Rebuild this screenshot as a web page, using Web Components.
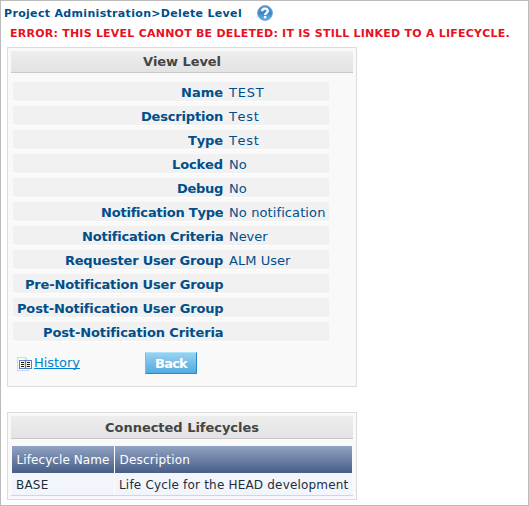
<!DOCTYPE html>
<html lang="en">
<head>
<meta charset="utf-8">
<title>Delete Level</title>
<style>
html,body{margin:0;height:100%}
body{font-family:Verdana,"DejaVu Sans",sans-serif;font-kerning:none;color:#004f8b;background:#fff;overflow:hidden}
</style>
</head>
<body>
<level-page></level-page>
<script>
// A single line of text whose tracking is adjusted to the width given in "w".
class TextRun extends HTMLElement{
  connectedCallback(){
    const r=this.attachShadow({mode:"open"});
    r.innerHTML=`<style>:host{display:inline-block;white-space:nowrap;vertical-align:top}span{display:inline-block}</style><span><slot></slot></span>`;
    const s=r.querySelector("span"),w=+this.getAttribute("w");
    const n=this.textContent.length;
    s.style.letterSpacing=((w-s.getBoundingClientRect().width)/n)+"px";
    this.style.width=w+"px";
  }
}
class HelpIcon extends HTMLElement{
  connectedCallback(){
    this.attachShadow({mode:"open"}).innerHTML=`<style>:host{display:block;width:16px;height:16px}svg{display:block}</style>
<svg width="16" height="16" viewBox="0 0 16 16"><defs><linearGradient id="g" x1="0" y1="0" x2="0" y2="1"><stop offset="0" stop-color="#5f9bd0"/><stop offset=".5" stop-color="#3985cb"/><stop offset="1" stop-color="#62b9f0"/></linearGradient></defs>
<circle cx="8" cy="8" r="7.4" fill="url(#g)" stroke="#6d9bc8" stroke-width=".9"/>
<path d="M5.2 6.2C5.2 2.8 10.8 2.8 10.8 6C10.8 7.8 8.1 7.9 8.1 10" fill="none" stroke="#fff" stroke-width="2.3"/><rect x="6.9" y="11" width="2.4" height="2.2" fill="#fff"/></svg>`;
  }
}
class HistoryIcon extends HTMLElement{
  connectedCallback(){
    this.attachShadow({mode:"open"}).innerHTML=`<style>:host{display:block;width:15px;height:14px}svg{display:block}</style>
<svg width="15" height="14" viewBox="0 0 15 14" shape-rendering="crispEdges"><path d="M.5.5H8.5L11.5 3.5V13.5H.5Z" fill="#f6fbff" stroke="#c3dcf1"/><path d="M8.5.5V3.5H11.5" fill="none" stroke="#c3dcf1"/>
<rect x="2.5" y="3.5" width="12" height="8" fill="#fff" stroke="#5d7fc0"/><path d="M8 3H9V12H8Z" fill="#777"/><path d="M7 4H8V11H7ZM9 4H10V11H9Z" fill="#e5dfcf"/>
<path d="M4 5H7V6H4ZM4 7H7V8H4ZM4 9H7V10H4ZM10 5H13V6H10ZM10 7H13V8H10ZM10 9H13V10H10Z" fill="#111"/></svg>`;
  }
}
class TitledPanel extends HTMLElement{
  connectedCallback(){
    this.attachShadow({mode:"open"}).innerHTML=`<style>
:host{display:block;box-sizing:border-box;width:350px;border:1px solid #dcdcdc;background:#f9f9f9;padding:3px}
header{box-sizing:border-box;height:var(--head,22px);border-bottom:1px solid #c8c8c8;background:linear-gradient(#eeeeee,#e3e3e3);text-align:center;font-weight:bold;font-size:13px;line-height:22px;color:#444;padding-top:var(--drop,0px)}
</style><header><slot name="title"></slot></header><slot></slot>`;
  }
}
class FieldRow extends HTMLElement{
  connectedCallback(){
    const a=k=>this.getAttribute(k);
    this.attachShadow({mode:"open"}).innerHTML=`<style>
:host{display:grid;grid-template-columns:210px 1fr;column-gap:6px;width:316px;height:19px;background:#f1f1f1;border-bottom:1px solid #fff;margin-bottom:4px;font-size:13px;line-height:22px}
b{text-align:right}
</style><b><text-run w="${a("lw")-1}">${a("label")}</text-run></b><span>${a("value")?`<text-run w="${a("vw")-.5}">${a("value")}</text-run>`:""}</span>`;
  }
}
class BackButton extends HTMLElement{
  connectedCallback(){
    this.attachShadow({mode:"open"}).innerHTML=`<style>
:host{display:block;width:52px;height:22px}
button{all:unset;box-sizing:border-box;display:block;width:52px;height:22px;border:1px solid;border-color:#a9e6fb #2489cd #2489cd #6fc1ec;background:linear-gradient(#9bd0f0,#4fabe0);color:#fff;font-weight:bold;font-size:13px;line-height:21px;text-align:center}
</style><button><slot></slot></button>`;
  }
}
class LifecycleTable extends HTMLElement{
  connectedCallback(){
    this.attachShadow({mode:"open"}).innerHTML=`<style>
:host{display:block;margin-top:7px;border-bottom:1px solid #d5d5d5;font-size:12px}
.row{display:grid;grid-template-columns:102px 1fr;column-gap:1px;margin:0 1px}
.head{background:#fff;color:#fff}
.head div{height:27px;line-height:29px;padding-left:4.5px;background:linear-gradient(#90a3c3,#485e87)}
.body{color:#222d3c;background:#fbfdff}
.body div{height:22px;line-height:25px;padding-left:4px;background:#f2f6fc}
</style><div class="row head"><div><text-run w="93">Lifecycle Name</text-run></div><div><text-run w="70.5">Description</text-run></div></div>
<div class="row body"><div><text-run w="32.5">BASE</text-run></div><div><text-run w="229.5">Life Cycle for the HEAD development</text-run></div></div>`;
  }
}
class LevelPage extends HTMLElement{
  connectedCallback(){
    this.attachShadow({mode:"open"}).innerHTML=`<style>
:host{display:block;box-sizing:border-box;width:529px;height:506px;border:1px solid #bbb;padding:4px 0 0 3px}
.crumb{display:flex;height:19px;font-weight:bold;font-size:11px;line-height:17px;gap:15px}
.error{height:23px;padding-left:6px;color:#e81123;font-weight:bold;font-size:11px;line-height:19px}
titled-panel{margin-left:3px}
.level{height:340px}
.fields{padding:9px 0 0 2px}
.actions{display:flex;padding:6px 0 0 6px;font-size:13px}
.actions history-icon{margin:5px 2px 0 0}
.actions a{width:111px;color:#0082cf;line-height:21px}
.actions a text-run{border-bottom:1px solid #0082cf;height:16px}
.linked{margin-top:25px;height:88px;--head:23px;--drop:1px}
</style>
<div class="crumb"><text-run w="238">Project Administration&gt;Delete Level</text-run><help-icon></help-icon></div>
<div class="error"><text-run w="500">ERROR: THIS LEVEL CANNOT BE DELETED: IT IS STILL LINKED TO A LIFECYCLE.</text-run></div>
<titled-panel class="level"><text-run slot="title" w="78">View Level</text-run>
<div class="fields">
<field-row label="Name" lw="43" value="TEST" vw="36"></field-row>
<field-row label="Description" lw="83" value="Test" vw="31"></field-row>
<field-row label="Type" lw="36" value="Test" vw="31"></field-row>
<field-row label="Locked" lw="52" value="No" vw="18"></field-row>
<field-row label="Debug" lw="47" value="No" vw="18"></field-row>
<field-row label="Notification Type" lw="123" value="No notification" vw="97"></field-row>
<field-row label="Notification Criteria" lw="142" value="Never" vw="39"></field-row>
<field-row label="Requester User Group" lw="159" value="ALM User" vw="62"></field-row>
<field-row label="Pre-Notification User Group" lw="199"></field-row>
<field-row label="Post-Notification User Group" lw="207"></field-row>
<field-row label="Post-Notification Criteria" lw="181"></field-row>
</div>
<div class="actions"><history-icon></history-icon><a><text-run w="46">History</text-run></a><back-button><text-run w="32">Back</text-run></back-button></div>
</titled-panel>
<titled-panel class="linked"><text-run slot="title" w="154">Connected Lifecycles</text-run><lifecycle-table></lifecycle-table></titled-panel>`;
  }
}
customElements.define("text-run",TextRun);
customElements.define("help-icon",HelpIcon);
customElements.define("history-icon",HistoryIcon);
customElements.define("titled-panel",TitledPanel);
customElements.define("field-row",FieldRow);
customElements.define("back-button",BackButton);
customElements.define("lifecycle-table",LifecycleTable);
customElements.define("level-page",LevelPage);
</script>
</body>
</html>
